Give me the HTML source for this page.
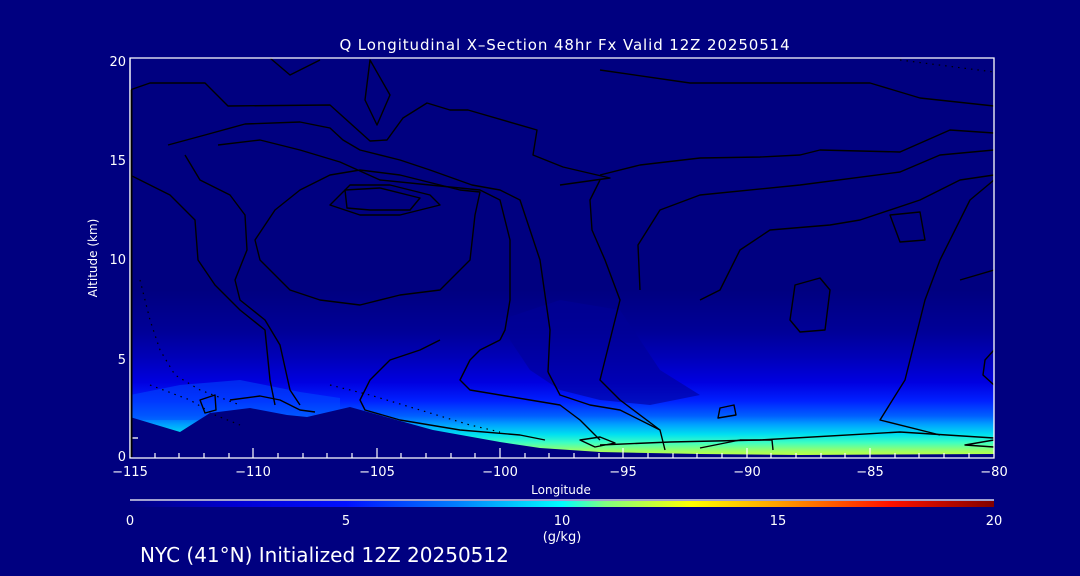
<!DOCTYPE html>
<html><head><meta charset="utf-8"><style>
html,body{margin:0;padding:0;background:#000080;}
body{width:1080px;height:576px;overflow:hidden;position:relative;font-family:"DejaVu Sans","Liberation Sans",sans-serif;}
</style></head><body>
<svg width="1080" height="576" viewBox="0 0 1080 576" xmlns="http://www.w3.org/2000/svg" style="position:absolute;left:0;top:0">
<defs>
<linearGradient id="fv" x1="0" y1="290" x2="0" y2="458" gradientUnits="userSpaceOnUse">
<stop offset="0" stop-color="#000080"/>
<stop offset="0.25" stop-color="#000098"/>
<stop offset="0.4" stop-color="#0000b8"/>
<stop offset="0.55" stop-color="#0000e0"/>
<stop offset="0.66" stop-color="#0020ff"/>
<stop offset="0.75" stop-color="#0060ff"/>
<stop offset="0.8" stop-color="#00a0ff"/>
<stop offset="0.86" stop-color="#00e0f0"/>
<stop offset="0.91" stop-color="#40ffc0"/>
<stop offset="0.96" stop-color="#a0ff60"/>
<stop offset="1" stop-color="#d0ff30"/>
</linearGradient>
<linearGradient id="cb" x1="130" y1="0" x2="994" y2="0" gradientUnits="userSpaceOnUse">
<stop offset="0" stop-color="#000080"/>
<stop offset="0.12" stop-color="#0000d0"/>
<stop offset="0.25" stop-color="#0010ff"/>
<stop offset="0.38" stop-color="#0080ff"/>
<stop offset="0.5" stop-color="#00ffff"/>
<stop offset="0.55" stop-color="#80ff80"/>
<stop offset="0.65" stop-color="#ffff00"/>
<stop offset="0.75" stop-color="#ffa000"/>
<stop offset="0.88" stop-color="#ff1000"/>
<stop offset="1" stop-color="#800000"/>
</linearGradient>
<clipPath id="pc"><rect x="130" y="58" width="864" height="400"/></clipPath>
</defs>
<g clip-path="url(#pc)">
<rect x="130" y="290" width="864" height="170" fill="url(#fv)"/>
<path d="M500 320 L560 300 L620 310 L640 340 L660 370 L700 395 L650 405 L600 400 L560 390 L530 370 L510 340 Z" fill="#000098" opacity="0.6"/>
<path d="M130 395 L180 385 L240 380 L300 392 L340 398 L340 420 L130 420 Z" fill="#0050ff" opacity="0.5"/>
<!-- terrain -->
<path d="M130 417 L180 432 L210 413 L250 408 L287 415 L307 417 L350 407 L433 430 L500 442 L540 448 L600 452 L700 454 L800 455 L994 454 L994 470 L130 470 Z" fill="#000080"/>
<g fill="none" stroke="#000" stroke-width="1.4" stroke-linejoin="round">
<path d="M130 90 L150 83 L205 83 L228 106 L330 105 L370 141 L387 140 L403 118 L427 103 L450 110 L468 110 L537 130 L533 155 L563 167 L610 178 L560 185"/>
<path d="M600 70 L690 83 L870 83 L920 98 L994 106"/>
<path d="M600 175 L640 165 L700 158 L760 157 L800 155 L820 150 L900 152 L950 130 L994 133"/>
<path d="M640 290 L638 245 L660 210 L700 195 L800 185 L900 172 L940 155 L994 150"/>
<path d="M130 175 L170 195 L195 220 L198 260 L215 285 L240 310 L265 330 L270 380 L275 405"/>
<path d="M168 145 L205 135 L245 124 L300 122 L330 128 L343 140 L360 150 L400 160 L430 170 L472 185 L500 190 L520 200 L540 260 L550 330 L548 372"/>
<path d="M218 145 L260 140 L300 150 L340 162 L380 180 L430 185 L480 190 L500 200 L510 240 L510 300 L505 330 L500 340"/>
<path d="M185 155 L200 180 L230 195 L245 215 L247 250 L235 280 L240 300 L265 320 L280 345 L290 390 L300 405"/>
<path d="M260 260 L255 240 L275 210 L300 190 L330 175 L360 170 L400 175 L460 190 L480 192 L475 215 L470 260 L440 290 L400 295 L360 305 L320 300 L290 290 Z"/>
<path d="M330 205 L350 185 L390 185 L430 195 L440 205 L400 215 L360 215 Z"/>
<path d="M345 190 L380 188 L420 198 L410 210 L370 210 L347 208 Z"/>
<path d="M370 60 L390 95 L377 125 L365 100 Z"/>
<path d="M270 58 L290 75 L310 65 L320 60"/>
<path d="M700 300 L720 290 L740 250 L770 230 L830 225 L860 220 L920 200 L960 180 L994 175"/>
<path d="M890 215 L920 212 L925 240 L900 242 Z"/>
<path d="M795 285 L820 278 L830 290 L825 330 L800 332 L790 320 Z"/>
<path d="M994 180 L970 200 L940 260 L925 300 L915 340 L905 380 L880 420 L940 435"/>
<path d="M960 280 L994 270"/>
<path d="M600 180 L590 200 L592 230 L605 260 L620 300 L610 340 L600 380 L620 400 L660 430 L665 450"/>
<path d="M548 372 L560 395 L590 405 L620 410 L660 430"/>
<path d="M500 340 L480 350 L470 360 L460 380 L470 390 L530 400 L560 405 L580 420 L600 440"/>
<path d="M440 340 L420 350 L390 360 L370 380 L360 400 L365 410 L400 420 L460 430 L520 435 L545 440"/>
<path d="M600 445 L670 442 L760 440 L900 432 L994 438"/>
<path d="M700 448 L740 440 L772 440 L773 450"/>
<path d="M720 408 L734 405 L736 415 L718 418 Z"/>
<path d="M580 440 L600 437 L615 443 L595 447 Z"/>
<path d="M994 440 L965 445 L994 447"/>
<path d="M994 350 L985 360 L983 375 L994 385"/>
<path d="M200 400 L215 395 L216 410 L205 413 Z"/>
<path d="M230 400 L260 396 L280 400 L300 410 L315 412"/>
</g>
<g fill="none" stroke="#000" stroke-width="1.2" stroke-dasharray="1.5 5">
<path d="M140 280 L150 320 L160 350 L175 375 L200 390 L240 405"/>
<path d="M150 385 L190 400 L215 415 L240 425"/>
<path d="M330 385 L370 395 L420 410 L470 425 L500 432"/>
<path d="M900 60 L994 72"/>
</g>
</g>
<g stroke="#fff" stroke-width="1.3" fill="none">
<path d="M130 58 L994 58 L994 458 L130 458 Z"/>
<path d="M130 438 L138 438"/>
</g>
<g stroke="#000" stroke-width="3"><path d="M131 90 L131 457"/></g>
<g stroke="#fff" stroke-width="1.2">
<path d="M130 58 L130 458"/>
<path d="M155 458v-5M179 458v-5M204 458v-5M229 458v-5M253 458v-10M278 458v-5M303 458v-5M327 458v-5M352 458v-5M377 458v-10M401 458v-5M426 458v-5M451 458v-5M475 458v-5M500 458v-10M525 458v-5M549 458v-5M574 458v-5M599 458v-5M623 458v-10M648 458v-5M673 458v-5M697 458v-5M722 458v-5M747 458v-10M771 458v-5M796 458v-5M821 458v-5M845 458v-5M870 458v-10M895 458v-5M919 458v-5M944 458v-5M969 458v-5"/>
<path d="M130 500 L994 500"/>
</g>
<rect x="130" y="501" width="864" height="6" fill="url(#cb)"/>
<g fill="#fff" font-size="13" font-family="DejaVu Sans, Liberation Sans, sans-serif">
<text x="565" y="50" text-anchor="middle" font-size="15" letter-spacing="0.9">Q Longitudinal X–Section 48hr  Fx Valid 12Z 20250514</text>
<g text-anchor="end">
<text x="126" y="66">20</text><text x="126" y="165">15</text><text x="126" y="264">10</text><text x="126" y="364">5</text><text x="126" y="461">0</text>
</g>
<g text-anchor="middle">
<text x="130" y="476">−115</text><text x="253" y="476">−110</text><text x="377" y="476">−105</text><text x="500" y="476">−100</text><text x="623" y="476">−95</text><text x="747" y="476">−90</text><text x="870" y="476">−85</text><text x="994" y="476">−80</text>
<text x="561" y="494" font-size="12">Longitude</text>
<text x="130" y="525">0</text><text x="346" y="525">5</text><text x="562" y="525">10</text><text x="778" y="525">15</text><text x="994" y="525">20</text>
<text x="562" y="541">(g/kg)</text>
</g>
<text transform="translate(97,258) rotate(-90)" text-anchor="middle" font-size="12">Altitude (km)</text>
<text x="140" y="562" font-size="20">NYC (41°N) Initialized 12Z 20250512</text>
</g>
</svg>
</body></html>
